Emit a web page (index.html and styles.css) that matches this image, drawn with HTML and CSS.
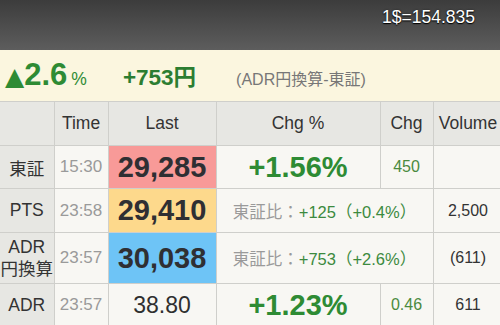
FILE: index.html
```html
<!DOCTYPE html>
<html lang="ja">
<head>
<meta charset="utf-8">
<title>Quote</title>
<link rel="stylesheet" href="styles.css">
</head>
<body>
<div class="topbar"><span class="rate">1$=154.835</span></div>
<div class="summary">
  <span class="pct"><span class="tri">▲</span>2.6<span class="pct-sign">%</span></span>
  <span class="yen">+753円</span>
  <span class="note">(ADR円換算-東証)</span>
</div>
<table class="quotes">
  <colgroup>
    <col class="c-label"><col class="c-time"><col class="c-last"><col class="c-pct"><col class="c-chg"><col class="c-vol">
  </colgroup>
  <thead>
    <tr class="r-head"><th class="label"></th><th>Time</th><th>Last</th><th>Chg %</th><th>Chg</th><th>Volume</th></tr>
  </thead>
  <tbody>
    <tr class="r1">
      <th class="label">東証</th><td class="time">15:30</td><td class="last bg-pink">29,285</td>
      <td class="bigpct">+1.56%</td><td class="chg">450</td><td class="vol"></td>
    </tr>
    <tr class="r2">
      <th class="label">PTS</th><td class="time">23:58</td><td class="last bg-yellow">29,410</td>
      <td class="diff" colspan="2"><span class="diff-lbl">東証比：</span><span class="diff-val">+125（+0.4%）</span></td><td class="vol">2,500</td>
    </tr>
    <tr class="r3">
      <th class="label two">ADR<br>円換算</th><td class="time">23:57</td><td class="last bg-blue">30,038</td>
      <td class="diff" colspan="2"><span class="diff-lbl">東証比：</span><span class="diff-val">+753（+2.6%）</span></td><td class="vol">(611)</td>
    </tr>
    <tr class="r4">
      <th class="label">ADR</th><td class="time">23:57</td><td class="plain">38.80</td>
      <td class="bigpct">+1.23%</td><td class="chg">0.46</td><td class="vol">611</td>
    </tr>
  </tbody>
</table>
</body>
</html>
```

FILE: styles.css
```css
html, body {
  margin: 0;
  padding: 0;
  overflow: hidden;
  background: #f8f7f3;
  font-family: "Liberation Sans", Arial, "Noto Sans CJK JP", sans-serif;
}

.topbar {
  height: 50px;
  background: linear-gradient(#3c3c3c, #5d5d5d);
  display: flex;
  justify-content: flex-end;
  align-items: flex-start;
  padding-right: 25px;
  box-sizing: border-box;
}

.rate {
  color: #ffffff;
  font-size: 17.5px;
  line-height: 20px;
  margin-top: 7px;
  text-shadow: 0 1px 1px #000000, 0 0 2px #222222;
}

.summary {
  height: 51px;
  box-sizing: border-box;
  background: #fbf6df;
  display: flex;
  align-items: baseline;
  padding: 7px 0 0 5px;
}

.pct {
  color: #2e8b34;
  font-weight: bold;
  font-size: 31px;
  line-height: 36px;
}

.tri {
  font-family: "DejaVu Sans", sans-serif;
  font-size: 25px;
  margin-right: 0;
}

.pct-sign {
  font-weight: normal;
  font-size: 17.5px;
  margin-left: 4px;
}

.yen {
  color: #2c7d31;
  font-weight: bold;
  font-size: 22.5px;
  margin-left: 36px;
}

.note {
  color: #777777;
  font-size: 16px;
  margin-left: 40px;
}

.quotes {
  border-collapse: collapse;
  table-layout: fixed;
  width: 503px;
}

.c-label { width: 54px; }
.c-time { width: 54px; }
.c-last { width: 108px; }
.c-pct { width: 164px; }
.c-chg { width: 53px; }
.c-vol { width: 70px; }

.quotes th, .quotes td {
  border: 1px solid #cfcfcb;
  padding: 0;
  text-align: center;
  vertical-align: middle;
  overflow: hidden;
  white-space: nowrap;
}

.quotes tr > :first-child {
  border-left: none;
}

.quotes thead th {
  background: #e7e7e3;
  color: #333333;
  font-weight: normal;
  font-size: 17.5px;
}

.quotes tbody td {
  background: #f8f7f3;
}

.quotes th.label {
  background: #e7e7e3;
  color: #333333;
  font-weight: normal;
  font-size: 17.5px;
}

.label.two {
  line-height: 22px;
}

.r-head { height: 44px; }
.r1 { height: 43px; }
.r2 { height: 44px; }
.r3 { height: 51px; }
.r4 { height: 43px; }

.time {
  color: #9a9a9a;
  font-size: 17px;
}

.last {
  color: #2f2f33;
  font-weight: bold;
  font-size: 29px;
}

.quotes tbody td.bg-pink { background: #f89a98; }
.quotes tbody td.bg-yellow { background: #fdd98c; }
.quotes tbody td.bg-blue { background: #6ec4f6; }

.plain {
  color: #2f2f2f;
  font-size: 23px;
}

.bigpct {
  color: #2e8b34;
  font-weight: bold;
  font-size: 29px;
}

.chg {
  color: #4a8a3e;
  font-size: 16px;
}

.vol {
  color: #333333;
  font-size: 16px;
}

.diff {
  font-size: 16.5px;
}

.diff-lbl {
  color: #9a9a9a;
}

.diff-val {
  color: #3c8a3e;
}
```
